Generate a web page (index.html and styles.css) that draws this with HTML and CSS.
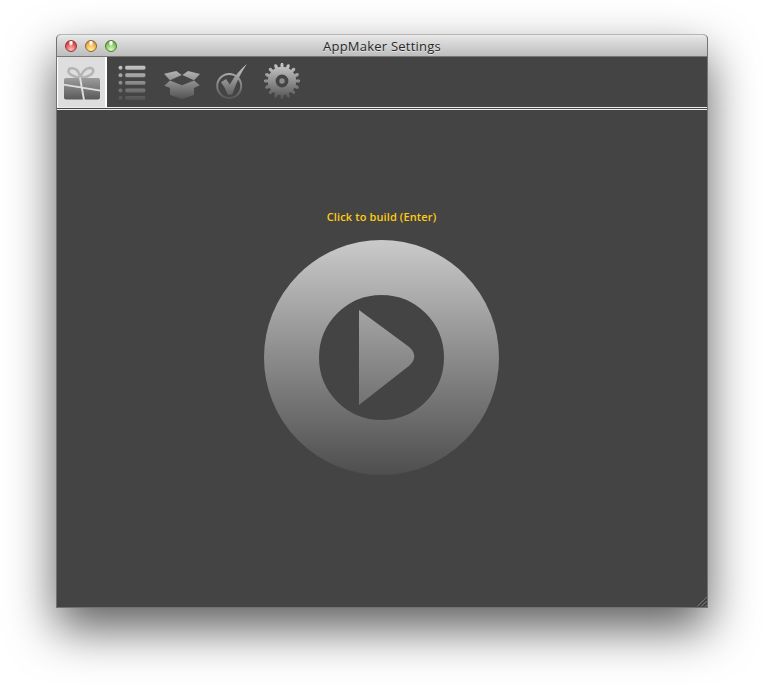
FILE: index.html
```
<!DOCTYPE html>
<html lang="en">
<head>
<meta charset="utf-8">
<title>AppMaker Settings</title>
<link rel="stylesheet" href="styles.css">
</head>
<body>
<main class="window">
  <header class="titlebar">
    <div class="lights"><i class="light red"></i><i class="light amber"></i><i class="light green"></i></div>
    <h1 class="title">AppMaker Settings</h1>
  </header>
  <nav class="toolbar">
    <div class="tool selected">
      <svg viewBox="0 0 50 50">
        <defs>
          <linearGradient id="gift" gradientUnits="userSpaceOnUse" x1="0" y1="21" x2="0" y2="43"><stop offset="0" stop-color="#9c9c9c"/><stop offset="1" stop-color="#585858"/></linearGradient>
          <linearGradient id="fade" gradientUnits="userSpaceOnUse" x1="0" y1="7" x2="0" y2="43"><stop offset="0" stop-color="#cacaca"/><stop offset="1" stop-color="#505050"/></linearGradient>
        </defs>
        <path d="M23.500 21C16 20 11 17 11.500 13.500 12 10 18.500 10.500 21 14.500 22.500 17 23 19 23.500 21ZM23.500 21C24.500 16 28 11.500 32 11 37 10.500 37.500 15 34 17.500 31 19.600 27 20.500 23.500 21Z" fill="none" stroke="#b4b4b4" stroke-width="2.500"/>
        <rect x="7" y="21" width="36" height="21.500" rx="2" fill="url(#gift)"/>
        <path d="M23 20.500 27 43M6.500 27.600 43.500 33.600" fill="none" stroke="#dedede" stroke-width="1.900"/>
      </svg>
    </div>
    <div class="tool">
      <svg viewBox="0 0 50 50" fill="url(#fade)">
        <circle cx="13.500" cy="10.700" r="2"/><rect x="18.200" y="8.800" width="20.200" height="3.900" rx="1.400"/>
        <circle cx="13.500" cy="18.200" r="2"/><rect x="18.200" y="16.300" width="20.200" height="3.900" rx="1.400"/>
        <circle cx="13.500" cy="25.800" r="2"/><rect x="18.200" y="23.900" width="20.200" height="3.900" rx="1.400"/>
        <circle cx="13.500" cy="33.400" r="2"/><rect x="18.200" y="31.500" width="20.200" height="3.900" rx="1.400"/>
        <circle cx="13.500" cy="41" r="2"/><rect x="18.200" y="39.100" width="20.200" height="3.900" rx="1.400"/>
      </svg>
    </div>
    <div class="tool">
      <svg viewBox="0 0 50 50" fill="url(#fade)">
        <path d="M7 16.700 19.300 14 24.700 18 13 23.200ZM25.300 18 31 14 43 17 37 23.200ZM13 23.500 25 28.300 37 23.500 42.800 28.300 37 31V38L25 42 13 38V31L7.200 28.700Z"/>
      </svg>
    </div>
    <div class="tool">
      <svg viewBox="0 0 50 50">
        <circle cx="22.200" cy="29" r="12" fill="none" stroke="url(#fade)" stroke-width="2"/>
        <path d="M14 25.200 19 22 22.800 27.500Q29.500 15.500 39.800 7 30.500 21 25.300 37.500L20.800 37.700Q18 30 14 25.200Z" fill="url(#fade)"/>
      </svg>
    </div>
    <div class="tool">
      <svg viewBox="0 0 50 50">
        <circle cx="25" cy="24" r="10.300" fill="none" stroke="url(#fade)" stroke-width="7.800"/>
        <circle class="teeth" cx="25" cy="24" r="15.200" pathLength="160" fill="none" stroke="url(#fade)" stroke-width="3.200"/>
        <circle class="tips" cx="25" cy="24" r="17.200" pathLength="160" fill="none" stroke="url(#fade)" stroke-width="1.600"/>
        <circle cx="25" cy="24" r="2.700" fill="#8c8c8c"/>
      </svg>
    </div>
  </nav>
  <section class="content">
    <p class="hint">Click to build (Enter)</p>
    <svg class="play" viewBox="0 0 235 235">
      <defs><linearGradient id="disc" gradientUnits="userSpaceOnUse" x1="0" y1="0" x2="0" y2="235"><stop offset="0" stop-color="#cacaca"/><stop offset=".5" stop-color="#8b8b8b"/><stop offset="1" stop-color="#4e4e4e"/></linearGradient></defs>
      <circle cx="117.500" cy="117.500" r="90" fill="none" stroke="url(#disc)" stroke-width="55"/>
      <path d="M95 70 144.500 106.500Q155.500 115.500 145.500 125.500L95 165Z" fill="url(#disc)"/>
    </svg>
    <svg class="grip" viewBox="0 0 10 10"><path d="M0 9.500 9.500 0M4 9.500 9.500 4M8 9.500 9.500 8" stroke="#aaa" stroke-width=".8"/><path d="M-1 9.500 8.500 0M3 9.500 9.500 3M7 9.500 9.500 7" stroke="#222" stroke-width=".5"/></svg>
  </section>
</main>
</body>
</html>
```
FILE: styles.css
```
* { box-sizing: border-box; }
body { margin: 0; height: 686px; overflow: hidden; background: #fff; font-family: "Open Sans", sans-serif; }
.window {
  width: 652px;
  height: 574px;
  margin: 34px 0 0 56px;
  display: flex;
  flex-direction: column;
  border: 1px solid #727272;
  border-top-color: #b5b5b5;
  border-radius: 5px 5px 0 0;
  background: #444;
  box-shadow: 0 21px 48px rgba(0, 0, 0, .63);
}
.titlebar {
  height: 22px;
  display: grid;
  grid-template-columns: 120px 1fr 120px;
  align-items: center;
  border-bottom: 1px solid #777;
  border-radius: 4px 4px 0 0;
  background: linear-gradient(#ececec, #e0e0e0 15%, #bdbdbd);
}
.lights { display: flex; gap: 8px; padding-left: 8px; }
.light { width: 12px; height: 12px; border-radius: 50%; border: 1px solid; }
.red { border-color: #8e3836; background: radial-gradient(ellipse at 50% 15%, #fff 0 12%, transparent 35%), radial-gradient(circle at 50% 90%, #ffc4bd, #e5484b 65%, #a82b2d); }
.amber { border-color: #94642c; background: radial-gradient(ellipse at 50% 15%, #fff 0 12%, transparent 35%), radial-gradient(circle at 50% 90%, #fff1a2, #efad45 65%, #ad7027); }
.green { border-color: #4e7b36; background: radial-gradient(ellipse at 50% 15%, #fff 0 12%, transparent 35%), radial-gradient(circle at 50% 90%, #ddffb5, #7fc05c 65%, #4b8537); }
.title { margin: 0; text-align: center; font-size: 13px; line-height: 18px; font-weight: 400; letter-spacing: .23px; color: #282828; white-space: nowrap; text-shadow: 0 1px #e4e4e4; }
.toolbar { height: 53px; display: flex; border-bottom: 3px double #eee; }
.tool { width: 50px; height: 50px; }
.tool svg { display: block; width: 50px; height: 50px; }
.selected { background: #dedede; box-shadow: inset 1px 0 #fff, inset -2px 0 #fff; }
.teeth { stroke-dasharray: 5.2 4.8; stroke-dashoffset: 2.6; }
.tips { stroke-dasharray: 3.4 6.6; stroke-dashoffset: 1.7; }
.content { flex: 1; position: relative; display: flex; flex-direction: column; align-items: center; padding: 99px 1px 0 0; }
.hint { margin: 0 0 15px; font-size: 11px; line-height: 16px; font-weight: 600; letter-spacing: .12px; color: #fc1; }
.play { width: 235px; height: 235px; margin-right: 1px; }
.grip { position: absolute; right: 0; bottom: 0; width: 10px; height: 10px; }
```
